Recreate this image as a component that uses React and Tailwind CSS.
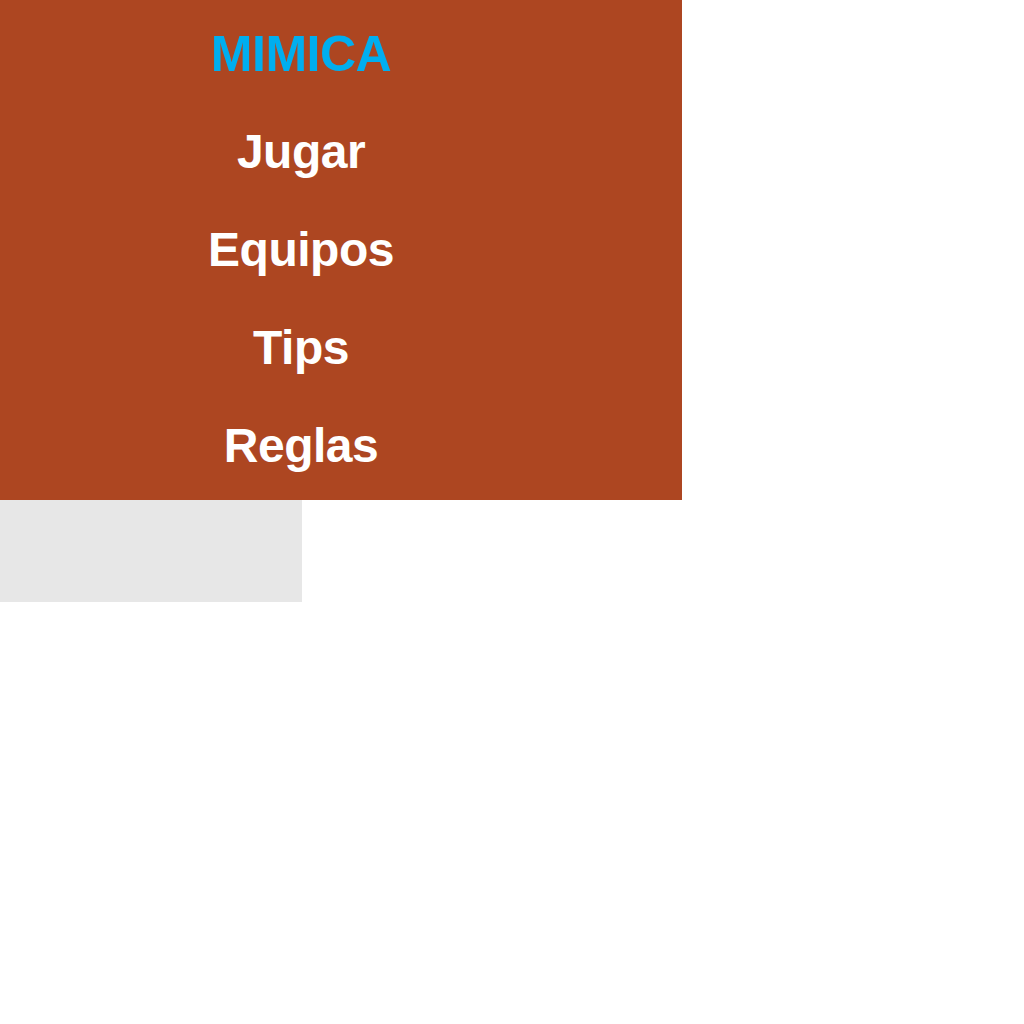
export default function App() {
  const items = ["Jugar", "Equipos", "Tips", "Reglas"];
  return (
    <div className="w-[1024px] h-[1024px] bg-white font-['Liberation_Sans',Arial,sans-serif]">
      <div className="w-[682px] h-[500px] bg-[#ad4621]">
        <div className="w-[602px] flex flex-col items-center pt-[5px]">
          <h1 className="text-[50px] font-bold leading-[98px] tracking-[-0.5px] text-[#00aeef] m-0">MIMICA</h1>
          {items.map((t) => (
            <a key={t} className="text-[48px] font-bold leading-[98px] tracking-[-0.5px] text-white">
              {t}
            </a>
          ))}
        </div>
      </div>
      <div className="w-[302px] h-[102px] bg-[#e7e7e7]" />
    </div>
  );
}
